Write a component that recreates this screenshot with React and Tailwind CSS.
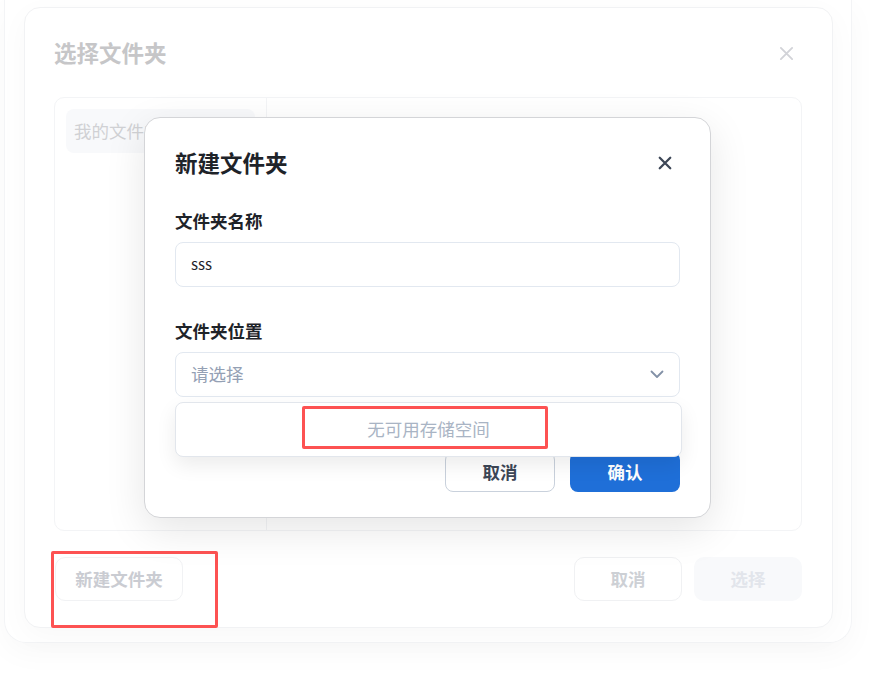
import React from "react";

const font = { fontFamily: '"Microsoft YaHei", "Noto Sans CJK SC", "Noto Sans", sans-serif' };

function XIcon({ size, color, stroke }) {
  return (
    <svg width={size} height={size} viewBox="0 0 16 16" fill="none">
      <path d="M2 2L14 14M14 2L2 14" stroke={color} strokeWidth={stroke} strokeLinecap="round" />
    </svg>
  );
}

export default function App() {
  return (
    <div className="relative w-[884px] h-[673px] bg-white overflow-hidden" style={font}>
      <div className="ml-[4px] w-[848px] h-[643px] rounded-b-[22px] border border-t-0 border-[#f3f4f6] shadow-[0_10px_30px_rgba(0,0,0,0.03)] pt-[7px] pl-[19px]">
        {/* background dialog (faded) */}
        <div className="w-[809px] rounded-[16px] border border-[#f1f2f4] bg-white pl-[29px] pr-[30px] pt-[22px] pb-[26px] shadow-[0_8px_30px_rgba(0,0,0,0.03)]">
          <div className="h-[46px] flex items-center justify-between">
            <div className="text-[22.5px] font-bold text-[#c6c6c8]">选择文件夹</div>
            <div className="mr-[6px] flex items-center justify-center w-[20px] h-[20px]">
              <XIcon size={15} color="#d2d3d8" stroke={2} />
            </div>
          </div>
          <div className="mt-[21px] h-[434px] w-[748px] rounded-[10px] border border-[#f3f4f6] flex">
            <div className="w-[212px] border-r border-[#f3f4f6] p-[11px]">
              <div className="h-[44px] rounded-[8px] bg-[#f8f9fb] flex items-center px-[8px] text-[17.5px] text-[#d0d1d4]">
                我的文件夹
              </div>
            </div>
            <div className="flex-1" />
          </div>
          <div className="mt-[26px] flex items-center justify-between">
            <div className="ml-[1px] w-[128px] h-[44px] rounded-[10px] border border-[#f1f2f4] flex items-center justify-center text-[17.5px] font-bold text-[#caccd2]">
              新建文件夹
            </div>
            <div className="flex gap-[12px]">
              <div className="w-[108px] h-[44px] rounded-[10px] border border-[#f0f1f3] flex items-center justify-center text-[17.5px] font-bold text-[#cdd0d5]">
                取消
              </div>
              <div className="w-[108px] h-[44px] rounded-[10px] bg-[#f8f9fb] flex items-center justify-center text-[17.5px] font-bold text-[#e2e5eb]">
                选择
              </div>
            </div>
          </div>
        </div>
      </div>

      {/* annotation: new folder button */}
      <div className="absolute left-[51px] top-[551px] w-[167px] h-[77px] border-[3px] border-[#fd5252] rounded-[2px]" />

      {/* modal */}
      <div className="absolute left-[144px] top-[117px] w-[567px] rounded-[16px] border border-[#d4d5d8] bg-white px-[30px] pt-[22px] pb-[25px] shadow-[0_12px_40px_rgba(0,0,0,0.10)]">
        <div className="h-[46px] flex items-center justify-between">
          <div className="text-[22.5px] font-bold text-[#1e2329]">新建文件夹</div>
          <div className="mr-[8px] flex items-center justify-center">
            <XIcon size={14} color="#3d4757" stroke={2.6} />
          </div>
        </div>
        <div className="mt-[24px] h-[22px] flex items-center text-[17.5px] font-bold text-[#1e2329]">文件夹名称</div>
        <div className="mt-[10px] h-[45px] w-[505px] rounded-[8px] border border-[#e2e8f0] flex items-center px-[15px] text-[15px] text-[#1e2329]">
          sss
        </div>
        <div className="mt-[33px] h-[22px] flex items-center text-[17.5px] font-bold text-[#1e2329]">文件夹位置</div>
        <div className="relative mt-[10px] h-[45px] w-[505px] rounded-[8px] border border-[#e2e8f0] flex items-center justify-between pl-[15px] pr-[15px]">
          <span className="text-[17.5px] text-[#94a0b4]">请选择</span>
          <svg width="14" height="9" viewBox="0 0 14 9" fill="none">
            <path d="M1.5 1.5L7 7L12.5 1.5" stroke="#8391a7" strokeWidth="1.8" strokeLinecap="round" strokeLinejoin="round" />
          </svg>
          <div className="absolute left-[-1px] top-[49px] z-10 w-[507px] h-[55px] rounded-[8px] border border-[#e2e6ec] bg-white shadow-[0_8px_20px_rgba(0,0,0,0.08)] flex items-center justify-center">
            <span className="text-[17.5px] text-[#a9b4c4]">无可用存储空间</span>
            <div className="absolute left-[126px] top-[3px] w-[246px] h-[43px] border-[3px] border-[#fd5252] rounded-[2px]" />
          </div>
        </div>
        <div className="mt-[55px] flex justify-end gap-[15px]">
          <div className="w-[110px] h-[40px] rounded-[8px] border border-[#c9d1dc] flex items-center justify-center text-[17.5px] font-bold text-[#3d4757]">
            取消
          </div>
          <div className="w-[110px] h-[40px] rounded-[8px] bg-[#1f6fd8] flex items-center justify-center text-[17.5px] font-bold text-white">
            确认
          </div>
        </div>
      </div>
    </div>
  );
}
